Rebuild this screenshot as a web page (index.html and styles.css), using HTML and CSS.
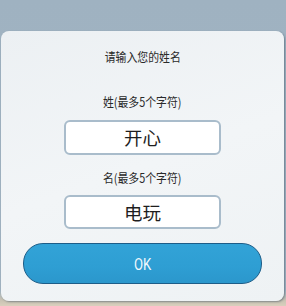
FILE: index.html
```html
<!DOCTYPE html>
<html>
<head>
<meta charset="utf-8">
<link rel="stylesheet" href="styles.css">
</head>
<body>
<div class="screen">
  <div class="dialog">
    <div class="title"><span class="narrow">请输入您的姓名</span></div>
    <div class="label first"><span class="narrow">姓(最多5个字符)</span></div>
    <div class="field">开心</div>
    <div class="label second"><span class="narrow">名(最多5个字符)</span></div>
    <div class="field short">电玩</div>
    <div class="ok"><span class="ok-text">OK</span></div>
  </div>
</div>
</body>
</html>
```
FILE: styles.css
```css
html, body {
  margin: 0;
  padding: 0;
}
body {
  width: 286px;
  height: 306px;
  overflow: hidden;
  font-family: "Noto Sans CJK SC", "Noto Sans", sans-serif;
  background: linear-gradient(to bottom, #9fb2c1 0px, #a3b5c3 290px, #c9c3b4 300px, #d9cfbd 306px);
}
.screen {
  padding-top: 31px;
  padding-left: 1px;
}
.dialog {
  width: 283px;
  height: 270px;
  box-sizing: border-box;
  border-radius: 8px;
  background: linear-gradient(160deg, #ecf0f3 0%, #f2f5f7 50%, #eef2f4 100%);
  box-shadow: 1px 1px 2px rgba(40, 60, 80, 0.45);
  display: flex;
  flex-direction: column;
  align-items: center;
  padding-top: 18px;
}
.narrow {
  display: inline-block;
  transform: scaleX(0.87);
}
.title {
  font-size: 12.5px;
  line-height: 16px;
  height: 16px;
  color: #2a2a2a;
}
.label {
  font-size: 12.5px;
  line-height: 16px;
  height: 16px;
  color: #2a2a2a;
}
.label.first {
  margin-top: 29px;
}
.label.second {
  margin-top: 15px;
}
.field {
  margin-top: 10px;
  width: 157px;
  height: 35px;
  box-sizing: border-box;
  border: 2px solid #a9bccb;
  border-radius: 6px;
  background: #ffffff;
  font-size: 18.5px;
  line-height: 31px;
  text-align: center;
  color: #1e1e1e;
}
.field.short {
  margin-top: 9px;
  height: 34px;
  line-height: 30px;
}
.ok {
  margin-top: 14px;
  width: 239px;
  height: 41px;
  box-sizing: border-box;
  border: 1.5px solid #1d5d88;
  border-radius: 20px;
  background: linear-gradient(to bottom, #32a3d7 0%, #2e9ed3 60%, #2b97cc 100%);
  text-align: center;
  line-height: 38px;
}
.ok-text {
  display: inline-block;
  transform: scaleX(0.82);
  color: #f2f9fd;
  font-family: Roboto, "Noto Sans", sans-serif;
  font-weight: 400;
  font-size: 16px;
}
```
